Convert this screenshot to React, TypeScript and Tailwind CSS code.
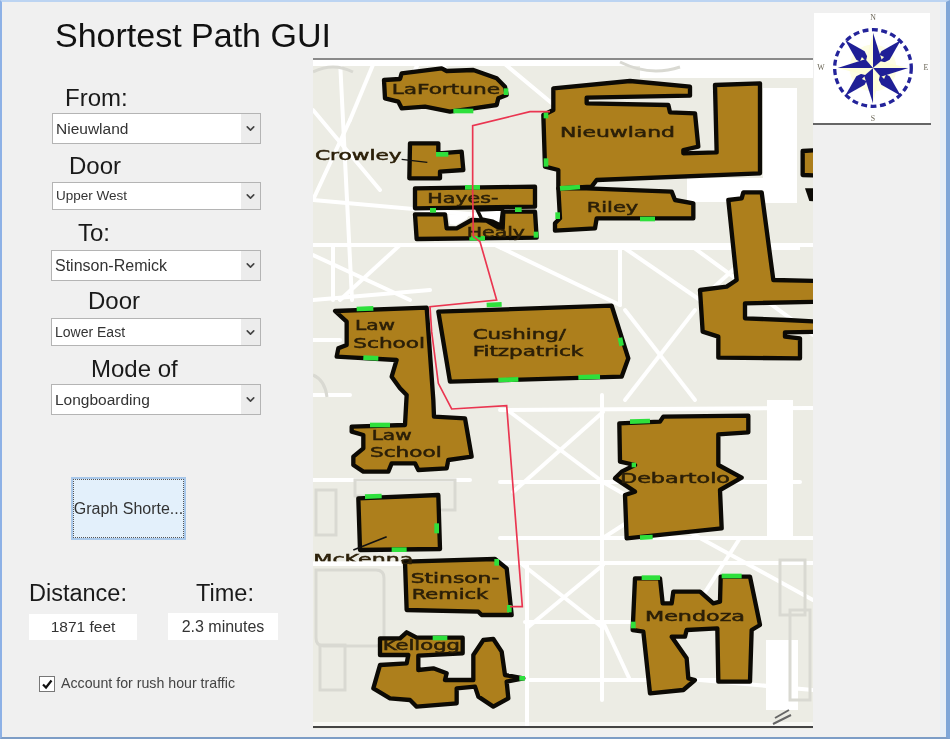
import { ChevronDown } from "lucide-react";

const arial = "font-['Liberation_Sans',Arial,sans-serif]";

const Combo = ({ value, size, h, ml = 52, w = 209 }: { value: string; size: string; h: string; ml?: number; w?: number }) => {
  return (
    <div
      className={`flex ${h} bg-white border border-[#b4b4b4] items-stretch text-[#333]`}
      style={{ marginLeft: ml, width: w }}
    >
      <span className={`flex-1 pl-[3px] flex items-center whitespace-nowrap ${size}`}>{value}</span>
      <span className="w-[19px] bg-[#ececec] flex items-center justify-center">
        <ChevronDown size={13} strokeWidth={3} className="text-[#444]" />
      </span>
    </div>
  );
};

const Caption = ({ text, ml, h }: { text: string; ml: number; h: string }) => {
  return (
    <div className={`${h} flex items-center text-[24px] leading-none text-[#1a1a1a]`} style={{ marginLeft: ml }}>
      {text}
    </div>
  );
};

const brown = "#ad7f1c";

// shapes traced in 3x crop coordinates
const upper = [
  "222,75 270,72 275,55 395,40 410,48 490,45 560,70 585,95 590,120 565,130 560,150 490,160 420,170 345,155 275,160 265,140 225,130",
  "730,100 960,78 1140,95 1140,122 830,128 830,145 1075,150 1080,172 1155,175 1165,275 1120,285 1120,295 1220,292 1215,90 1350,85 1350,355 860,375 845,395 745,400 745,345 705,335 700,180 730,165",
  "745,400 830,400 1085,410 1095,435 1150,445 1150,490 860,490 855,520 735,527 735,505 750,490",
  "300,265 385,265 385,295 455,290 460,345 390,350 390,370 298,370",
  "315,400 675,395 675,455 315,460",
  "315,478 405,478 410,520 440,520 485,495 530,497 560,515 578,520 580,470 675,470 680,548 320,552",
  "1255,435 1295,430 1300,412 1355,412 1390,675 1530,678 1530,740 1305,745 1305,790 1430,795 1530,800 1530,830 1425,832 1425,845 1470,850 1470,910 1225,908 1225,845 1178,830 1170,705 1250,695 1280,675",
  "1478,288 1530,285 1530,362 1478,360",
  "75,768 350,758 370,1035 372,1085 465,1090 485,1205 415,1215 410,1240 325,1245 315,1225 245,1225 235,1250 160,1250 130,1230 130,1205 160,1180 160,1140 125,1130 125,1115 285,1110 290,1020 270,1000 245,965 260,915 80,905 85,880 110,870 110,800",
  "385,770 905,752 955,910 935,965 420,980",
];

const lower = [
  "928,85 1050,80 1060,65 1315,62 1315,112 1225,118 1225,210 1295,248 1230,285 1235,400 950,430 945,300 975,290 915,250 935,230 975,210 930,200",
  "145,310 385,300 390,462 150,465",
  "285,500 555,492 590,520 605,660 515,660 505,650 290,645",
  "975,550 1050,550 1058,625 1085,625 1090,590 1170,590 1210,625 1230,620 1232,545 1320,545 1350,690 1325,705 1320,860 1225,860 1222,700 1130,705 1125,725 1085,725 1130,790 1135,850 1155,855 1120,885 1020,895 1000,710 968,705",
  "210,730 270,730 290,712 320,728 458,728 458,775 325,782 325,825 370,820 410,835 405,855 490,855 490,780 520,735 550,732 575,770 585,840 640,850 590,860 595,910 550,935 505,905 495,875 440,880 440,925 320,935 300,915 240,910 190,880 210,810 290,805 295,780 210,780",
];

// [x1, y1, x2, y2]
const doorsUpper = [
  [430, 168, 490, 168], [588, 100, 588, 120], [378, 298, 415, 298], [708, 172, 708, 190], [708, 310, 708, 335],
  [750, 400, 810, 396], [743, 472, 743, 492], [990, 492, 1035, 492], [465, 397, 510, 397], [360, 466, 378, 466],
  [615, 464, 635, 464], [478, 550, 525, 550], [678, 530, 678, 548], [140, 762, 190, 760], [160, 908, 205, 910],
  [530, 750, 575, 748], [930, 848, 935, 872], [565, 975, 625, 973], [805, 967, 870, 965],
];
const doorsLower = [
  [180, 90, 240, 90], [960, 80, 1020, 78], [965, 210, 978, 210], [990, 428, 1028, 426], [165, 305, 215, 303],
  [380, 385, 380, 415], [245, 464, 290, 464], [560, 492, 560, 512], [598, 630, 598, 652], [368, 729, 412, 729],
  [628, 850, 645, 850], [995, 548, 1050, 548], [1235, 543, 1295, 543], [970, 680, 970, 700],
];

// [text, x, baseline, width]
const namesUpper: [string, number, number, number][] = [
  ["LaFortune", 245, 116, 325], ["Nieuwland", 750, 247, 345], ["Riley", 830, 470, 155], ["Crowley", 15, 315, 260],
  ["Hayes-", 352, 443, 213], ["Healy", 470, 545, 175], ["Law", 135, 825, 120], ["School", 130, 878, 215],
  ["Cushing/", 488, 852, 280], ["Fitzpatrick", 488, 902, 332],
];
const namesLower: [string, number, number, number][] = [
  ["Law", 185, 135, 120], ["School", 180, 187, 215], ["Debartolo", 930, 263, 330], ["McKenna", 10, 506, 300],
  ["Stinson-", 302, 563, 266], ["Remick", 305, 613, 230], ["Kellogg", 218, 765, 232], ["Mendoza", 1005, 677, 300],
];

// page coordinates
const roads = [
  [313, 245, 813, 245], [313, 200, 480, 215], [313, 300, 430, 290], [500, 410, 813, 408], [500, 482, 800, 482],
  [500, 538, 813, 538], [500, 563, 813, 563], [313, 480, 470, 480], [525, 622, 700, 622], [530, 680, 720, 680],
  [340, 60, 352, 300], [375, 60, 350, 120], [420, 60, 400, 100], [333, 245, 333, 300], [313, 110, 380, 190],
  [495, 245, 620, 305], [620, 245, 620, 305], [602, 395, 602, 700], [527, 565, 527, 725], [620, 245, 700, 300],
  [510, 412, 603, 482], [603, 412, 513, 492], [523, 565, 603, 628], [603, 565, 527, 628], [603, 482, 700, 538],
  [603, 538, 690, 482], [603, 622, 630, 680], [690, 245, 813, 335], [760, 245, 700, 300], [440, 60, 470, 110],
  [625, 310, 695, 400], [695, 310, 625, 400], [313, 340, 340, 340], [313, 395, 350, 395], [700, 680, 813, 690],
  [700, 538, 813, 600], [740, 538, 700, 600], [350, 120, 313, 200], [500, 60, 560, 110], [313, 255, 410, 300],
  [400, 245, 340, 300],
];

const greyOutlines = [
  "M316 570 h60 q8 0 8 8 v60 q0 8 -8 8 h-52 q-8 0 -8 -8 z",
  "M320 645 h25 v45 h-25 z",
  "M316 490 h20 v45 h-20 z",
  "M355 480 h100 v30 h-18 v-14 h-82 z",
  "M780 560 h25 v55 h-25 z",
  "M790 610 h20 v90 h-20 z",
  "M313 72 q20 -10 40 0",
  "M620 62 q30 15 60 5",
  "M313 375 q12 5 14 22",
];

const Star = () => {
  const long = [0, 90, 180, 270];
  const short = [45, 135, 225, 315];
  return (
    <svg viewBox="0 0 118 112" width={118} height={110} className="block">
      <rect width="118" height="112" fill="#fff" />
      <circle cx="60" cy="56" r="39" fill="none" stroke="#23239a" strokeWidth="3.4" strokeDasharray="6 3.6" />
      <circle cx="60" cy="56" r="24" fill="#fdfde4" />
      {short.map((a) => (
        <g key={a} transform={`rotate(${a} 60 56)`}>
          <polygon points="60,16 54,38 60,56 66,38" fill="#1f1f96" />
          <polygon points="60,40 55,42 60,56" fill="#fbfbc8" />
        </g>
      ))}
      {long.map((a) => (
        <g key={a} transform={`rotate(${a} 60 56)`}>
          <polygon points="60,20 53,48 60,56" fill="#fdfdd8" />
          <polygon points="60,20 69,48 60,56" fill="#1f1f96" />
        </g>
      ))}
      <g fontFamily="'Liberation Serif',serif" fontSize="8" fill="#6b6657" textAnchor="middle">
        <text x="60" y="7">N</text>
        <text x="7" y="58">W</text>
        <text x="114" y="58">E</text>
        <text x="60" y="110">S</text>
      </g>
    </svg>
  );
};

const CampusMap = () => {
  const names = (list: [string, number, number, number][]) =>
    list.map(([t, x, y, w]) => (
      <text key={t + x} x={x} y={y} textLength={w} lengthAdjust="spacingAndGlyphs" fontSize="40" fontFamily="'DejaVu Sans',sans-serif" fill="#2b1f08" stroke="#2b1f08" strokeWidth="1.5">
        {t}
      </text>
    ));
  const doors = (list: number[][]) =>
    list.map(([a, b, c, d]) => <line key={`${a}-${b}`} x1={a} y1={b} x2={c} y2={d} stroke="#2ee03c" strokeWidth="14" />);
  const shapes = (list: string[]) =>
    list.map((p) => <polygon key={p} points={p} fill={brown} stroke="#0c0a05" strokeWidth="13" strokeLinejoin="round" />);

  return (
    <svg viewBox="313 58 500 671" width={500} height={671} className="block blur-[0.4px]">
      <rect x="313" y="58" width="500" height="671" fill="#ecece4" />
      <rect x="313" y="60" width="500" height="6" fill="#fff" />
      <rect x="640" y="60" width="173" height="18" fill="#fff" />
      <rect x="763" y="88" width="34" height="115" fill="#fff" />
      <rect x="687" y="178" width="110" height="24" fill="#fff" />
      <rect x="767" y="400" width="26" height="140" fill="#fff" />
      <rect x="766" y="640" width="32" height="70" fill="#fff" />
      <rect x="500" y="245" width="300" height="5" fill="#fff" />
      <rect x="313" y="722" width="500" height="5" fill="#f8f8f4" />
      <g stroke="#fff" strokeWidth="4" strokeLinecap="round">
        {roads.map(([a, b, c, d]) => (
          <line key={`${a}-${b}-${c}-${d}`} x1={a} y1={b} x2={c} y2={d} />
        ))}
      </g>
      <g fill="none" stroke="#d9d9d2" strokeWidth="3">
        {greyOutlines.map((d) => (
          <path key={d} d={d} />
        ))}
      </g>
      <path d="M775 718 l14 -8 M773 724 l18 -9 M775 727 h14" stroke="#666" strokeWidth="2" />

      <g transform="translate(310 55) scale(0.33333)">
        {shapes(upper)}
        <polygon points="502,465 578,462 572,510 548,498 515,492" fill="#fff" stroke="#0c0a05" strokeWidth="10" />
        <polygon points="415,478 478,478 470,492 438,510 420,508" fill="#fff" />
        <polygon points="1485,400 1530,400 1530,440 1498,438" fill="#0c0a05" />
        {doors(doorsUpper)}
        {names(namesUpper)}
        <line x1="275" y1="313" x2="352" y2="322" stroke="#111" strokeWidth="4" />
        <g transform="translate(0 1020)">
          {shapes(lower)}
          {doors(doorsLower)}
          {names(namesLower)}
          <rect x="5" y="499" width="270" height="14" fill="#fff" />
          <line x1="130" y1="465" x2="230" y2="425" stroke="#111" strokeWidth="5" />
        </g>
        <polyline
          points="720,170 660,170 488,212 488,400 490,545 510,560 560,735 360,755 365,830 385,985 425,1062 590,1052 637,1655 600,1655"
          fill="none"
          stroke="#ea3550"
          strokeWidth="5"
        />
      </g>
      <line x1="313" y1="59" x2="813" y2="59" stroke="#8a8a8a" strokeWidth="2" />
      <line x1="313" y1="727" x2="813" y2="727" stroke="#444" strokeWidth="2" />
    </svg>
  );
};

const App = () => {
  return (
    <div className={`w-[950px] h-[739px] overflow-hidden bg-[#f0f0f0] border-t-2 border-t-[#bcd4f2] border-l-2 border-l-[#8db1e6] border-r-4 border-r-[#7fa6d8] border-b-2 border-b-[#7d9dc6] ${arial} blur-[0.4px]`}>
      <div className="flex w-full h-full">
        <div className="w-[311px] shrink-0">
          <h1 className="ml-[53px] mt-[12px] h-[41px] flex items-center text-[34px] leading-none whitespace-nowrap text-[#111]">
            Shortest Path GUI
          </h1>
          <Caption text="From:" ml={63} h="h-[30px] mt-[28px]" />
          <Combo value="Nieuwland" size="text-[15.5px]" h="h-[31px]" ml={50} />
          <Caption text="Door" ml={67} h="h-[38px] pt-[6px]" />
          <Combo value="Upper West" size="text-[13.5px]" h="h-[28px]" ml={50} />
          <Caption text="To:" ml={76} h="h-[40px] pt-[6px]" />
          <Combo value="Stinson-Remick" size="text-[16px]" h="h-[31px]" ml={49} w={210} />
          <Caption text="Door" ml={86} h="h-[37px] pt-[2px]" />
          <Combo value="Lower East" size="text-[14px]" h="h-[28px]" ml={49} w={210} />
          <Caption text="Mode of" ml={89} h="h-[38px] pt-[8px]" />
          <Combo value="Longboarding" size="text-[15.5px]" h="h-[31px]" ml={49} w={210} />
          <button className="ml-[69px] mt-[62px] w-[115px] h-[63px] block bg-[#e3f0fb] border-2 border-[#a9c8ea] outline-1 outline-dotted -outline-offset-3 outline-[#555] text-[16px] text-[#333] whitespace-nowrap">
            Graph Shorte...
          </button>
          <div className="flex mt-[40px]">
            <div className="ml-[27px] w-[108px] flex flex-col">
              <div className="text-[23.5px] leading-[27px] h-[34px] text-[#1a1a1a]">Distance:</div>
              <div className="h-[26px] bg-white flex items-center justify-center text-[15.5px] text-[#333]">1871 feet</div>
            </div>
            <div className="ml-[31px] w-[110px] flex flex-col">
              <div className="text-[23.5px] leading-[27px] h-[33px] text-center pl-[4px] text-[#1a1a1a]">Time:</div>
              <div className="h-[27px] bg-white flex items-center justify-center text-[16px] text-[#333]">2.3 minutes</div>
            </div>
          </div>
          <label className="flex items-center ml-[37px] mt-[33px] gap-[6px] text-[14.2px] text-[#444] whitespace-nowrap">
            <span className="w-[16px] h-[16px] border border-[#777] bg-white flex items-center justify-center">
              <svg viewBox="0 0 12 12" width={12} height={12}>
                <path d="M2 6.5 L5 9.5 L10.5 2.5" fill="none" stroke="#111" strokeWidth="2.2" />
              </svg>
            </span>
            Account for rush hour traffic
          </label>
        </div>
        <div className="w-[500px] shrink-0 mt-[56px]">
          <CampusMap />
        </div>
        <div className="flex-1 border-r-[6px] border-r-[#e6eef7]">
          <div className="mt-[11px] w-[118px] h-[110px] border-b-2 border-[#666] box-content">
            <Star />
          </div>
        </div>
      </div>
    </div>
  );
};

export default App;
